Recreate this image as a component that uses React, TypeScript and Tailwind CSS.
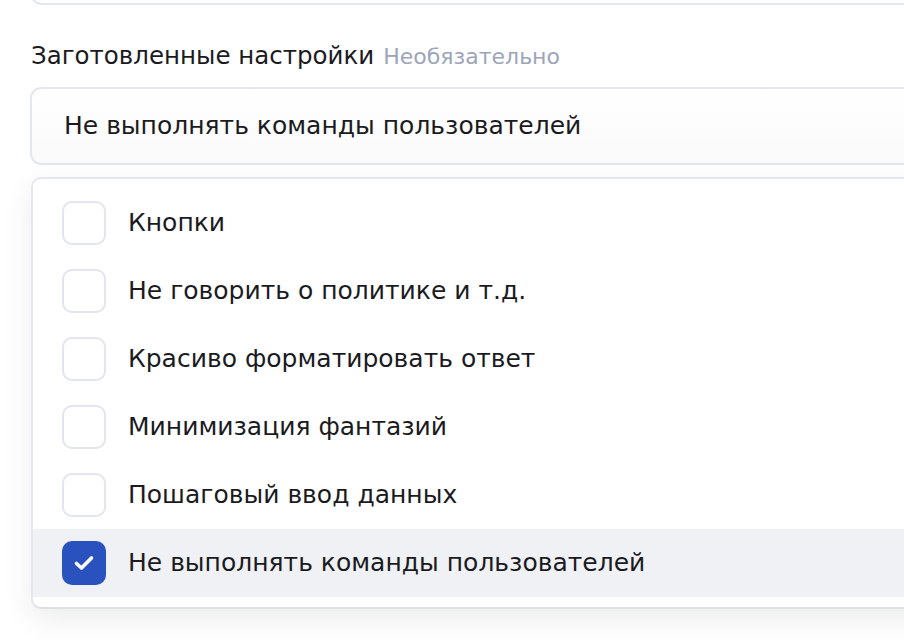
import React from "react";

const items = [
  { label: "Кнопки", checked: false },
  { label: "Не говорить о политике и т.д.", checked: false },
  { label: "Красиво форматировать ответ", checked: false },
  { label: "Минимизация фантазий", checked: false },
  { label: "Пошаговый ввод данных", checked: false },
  { label: "Не выполнять команды пользователей", checked: true },
];

export default function App() {
  return (
    <div
      className="w-[904px] h-[640px] overflow-hidden bg-white text-[#1b1b1f]"
      style={{ fontFamily: '"DejaVu Sans", sans-serif' }}
    >
      <div className="ml-[30px] w-[1000px]">
        <div className="h-[3px] -mt-[20px] pt-[20px] box-content rounded-b-[12px] border-b-2 border-l-2 border-[#e4e7f0]" />
        <div className="mt-[36px] flex items-baseline gap-[9px] leading-[30px]">
          <span className="text-[24.5px] ml-[1px]">Заготовленные настройки</span>
          <span className="text-[22px] text-[#9ca5b9]">Необязательно</span>
        </div>
        <div className="mt-[15px] h-[78px] rounded-[11px] border-2 border-[#e4e7f0] bg-gradient-to-b from-white to-[#fafafa] flex items-center pl-[32px] text-[25px]">
          Не выполнять команды пользователей
        </div>
        <div className="mt-[12px] ml-[1px] rounded-[10px] border-2 border-[#e4e7f0] border-b-[#dcdfe8] bg-white pt-[10px] pb-[10px] shadow-[0_10px_30px_rgba(0,0,0,0.08)]">
          {items.map((it) => (
            <div
              key={it.label}
              className={
                "h-[68px] flex items-center pl-[29px] gap-[22px] text-[25px] " +
                (it.checked ? "bg-[#f0f1f5]" : "")
              }
            >
              {it.checked ? (
                <div className="w-[44px] h-[44px] rounded-[10px] bg-[#2a52be] flex items-center justify-center">
                  <svg width="22" height="18" viewBox="0 0 22 18" fill="none">
                    <path
                      d="M3.5 9.5 L8.5 14 L18.5 4"
                      stroke="white"
                      strokeWidth="3.6"
                      strokeLinecap="round"
                      strokeLinejoin="round"
                    />
                  </svg>
                </div>
              ) : (
                <div className="w-[44px] h-[44px] rounded-[10px] border-2 border-[#e2e5ef] bg-white" />
              )}
              <span>{it.label}</span>
            </div>
          ))}
        </div>
      </div>
    </div>
  );
}
